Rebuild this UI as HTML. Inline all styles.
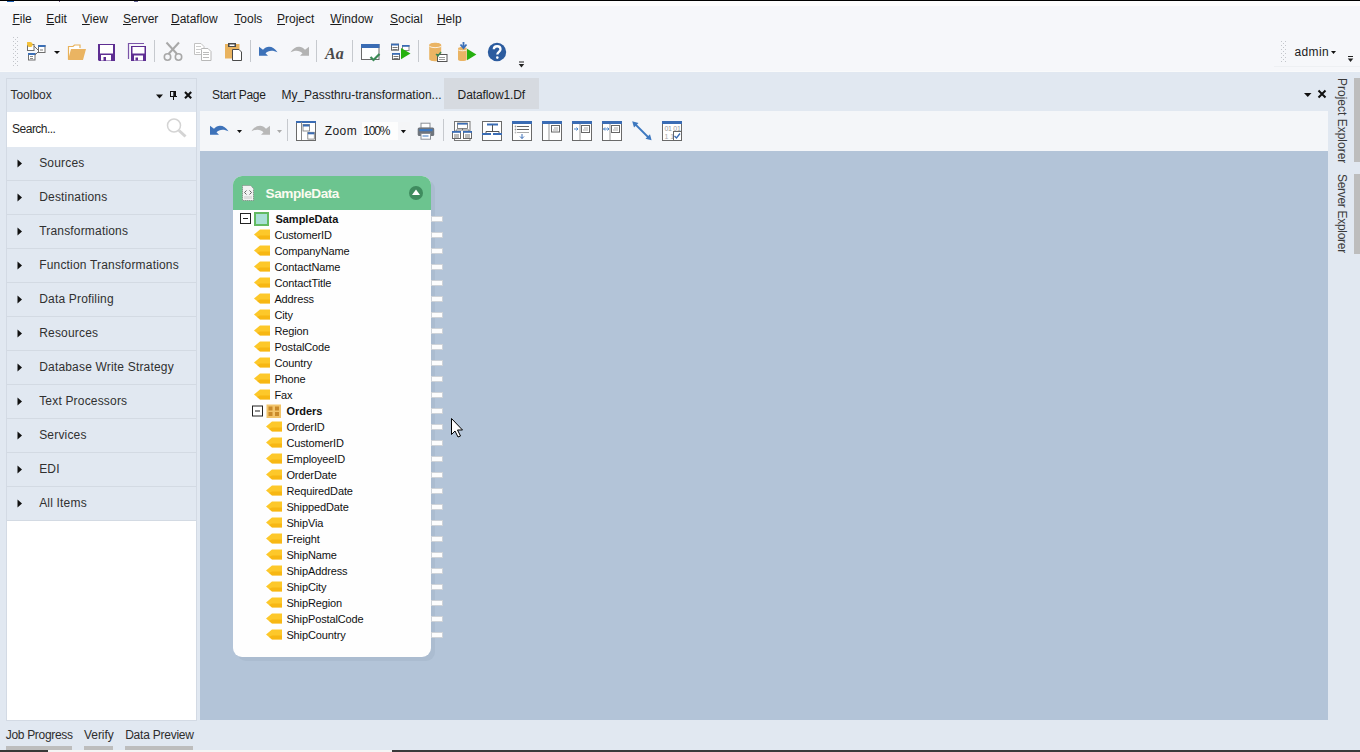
<!DOCTYPE html>
<html><head><meta charset="utf-8">
<style>
*{margin:0;padding:0;box-sizing:border-box}
html,body{width:1360px;height:752px;overflow:hidden}
body{position:relative;background:#e1e8f1;font-family:"Liberation Sans",sans-serif;color:#1e1e1e}
.a{position:absolute}
.t{position:absolute;white-space:nowrap;line-height:1}
.u{text-decoration:underline;text-underline-offset:1px;text-decoration-thickness:1px}
svg{position:absolute;left:0;top:0}
</style></head><body>

<div class="a" style="left:0px;top:0px;width:1360px;height:1px;background:#000;"></div>
<div class="a" style="left:0px;top:1px;width:1360px;height:6px;background:#fdfdfd;"></div>
<div class="a" style="left:7px;top:1px;width:7px;height:1px;background:#1d5fb0;"></div>
<div class="a" style="left:59px;top:1px;width:1px;height:1px;background:#7a5a8a;"></div>
<div class="a" style="left:134px;top:1px;width:4px;height:1px;background:#6a6a9a;"></div>
<div class="a" style="left:0px;top:6px;width:1360px;height:66px;background:#f6f7fa;"></div>
<div class="a" style="left:0px;top:71px;width:1360px;height:1px;background:#f9fafb;"></div>
<div class="a" style="left:1274px;top:66px;width:86px;height:1px;background:#eef0f3;"></div>
<div class="a" style="left:6px;top:78px;width:191px;height:643px;background:#fff;border:1px solid #d3dae4;"></div>
<div class="a" style="left:7px;top:79px;width:189px;height:33px;background:#e1e8f1;"></div>
<div class="a" style="left:7px;top:112px;width:189px;height:35px;background:#fff;"></div>
<div class="a" style="left:7px;top:147px;width:189px;height:34px;background:#e1e8f1;border-bottom:1px solid #d3dae3;"></div>
<div class="a" style="left:7px;top:181px;width:189px;height:34px;background:#e1e8f1;border-bottom:1px solid #d3dae3;"></div>
<div class="a" style="left:7px;top:215px;width:189px;height:34px;background:#e1e8f1;border-bottom:1px solid #d3dae3;"></div>
<div class="a" style="left:7px;top:249px;width:189px;height:34px;background:#e1e8f1;border-bottom:1px solid #d3dae3;"></div>
<div class="a" style="left:7px;top:283px;width:189px;height:34px;background:#e1e8f1;border-bottom:1px solid #d3dae3;"></div>
<div class="a" style="left:7px;top:317px;width:189px;height:34px;background:#e1e8f1;border-bottom:1px solid #d3dae3;"></div>
<div class="a" style="left:7px;top:351px;width:189px;height:34px;background:#e1e8f1;border-bottom:1px solid #d3dae3;"></div>
<div class="a" style="left:7px;top:385px;width:189px;height:34px;background:#e1e8f1;border-bottom:1px solid #d3dae3;"></div>
<div class="a" style="left:7px;top:419px;width:189px;height:34px;background:#e1e8f1;border-bottom:1px solid #d3dae3;"></div>
<div class="a" style="left:7px;top:453px;width:189px;height:34px;background:#e1e8f1;border-bottom:1px solid #d3dae3;"></div>
<div class="a" style="left:7px;top:487px;width:189px;height:34px;background:#e1e8f1;border-bottom:1px solid #d3dae3;"></div>
<div class="a" style="left:200px;top:78px;width:1128px;height:33px;background:#e1e8f1;"></div>
<div class="a" style="left:444px;top:78px;width:95px;height:31px;background:#d6dae0;"></div>
<div class="a" style="left:200px;top:111px;width:1128px;height:40px;background:#f4f6f9;"></div>
<div class="a" style="left:200px;top:151px;width:1128px;height:569px;background:#b3c4d8;"></div>
<div class="a" style="left:1354px;top:78px;width:6px;height:84px;background:#bdbdbd;"></div>
<div class="a" style="left:1354px;top:174px;width:6px;height:80px;background:#bdbdbd;"></div>
<div class="a" style="left:6px;top:746px;width:66px;height:4px;background:#bdbdbd;"></div>
<div class="a" style="left:84px;top:746px;width:29px;height:4px;background:#bdbdbd;"></div>
<div class="a" style="left:125px;top:746px;width:68px;height:4px;background:#bdbdbd;"></div>
<div class="a" style="left:0px;top:750px;width:48px;height:2px;background:#383838;"></div>
<div class="a" style="left:48px;top:750px;width:344px;height:2px;background:#f4f4f4;"></div>
<div class="a" style="left:392px;top:750px;width:968px;height:2px;background:#3a3a3a;"></div>
<div class="a" style="left:237px;top:180px;width:198px;height:481px;background:#abbcd0;border-radius:9px;"></div>
<div class="a" style="left:233px;top:176px;width:198px;height:481px;background:#fefefe;border-radius:9px;overflow:hidden;"></div>
<div class="a" style="left:233px;top:176px;width:198px;height:34px;background:#6cc48f;border-radius:9px 9px 0 0;"></div>
<div class="a" style="left:431px;top:216px;width:12px;height:6px;background:#fdfdfd;border:1px solid #cfd3d8;"></div>
<div class="a" style="left:431px;top:232px;width:12px;height:6px;background:#fdfdfd;border:1px solid #cfd3d8;"></div>
<div class="a" style="left:431px;top:248px;width:12px;height:6px;background:#fdfdfd;border:1px solid #cfd3d8;"></div>
<div class="a" style="left:431px;top:264px;width:12px;height:6px;background:#fdfdfd;border:1px solid #cfd3d8;"></div>
<div class="a" style="left:431px;top:280px;width:12px;height:6px;background:#fdfdfd;border:1px solid #cfd3d8;"></div>
<div class="a" style="left:431px;top:296px;width:12px;height:6px;background:#fdfdfd;border:1px solid #cfd3d8;"></div>
<div class="a" style="left:431px;top:312px;width:12px;height:6px;background:#fdfdfd;border:1px solid #cfd3d8;"></div>
<div class="a" style="left:431px;top:328px;width:12px;height:6px;background:#fdfdfd;border:1px solid #cfd3d8;"></div>
<div class="a" style="left:431px;top:344px;width:12px;height:6px;background:#fdfdfd;border:1px solid #cfd3d8;"></div>
<div class="a" style="left:431px;top:360px;width:12px;height:6px;background:#fdfdfd;border:1px solid #cfd3d8;"></div>
<div class="a" style="left:431px;top:376px;width:12px;height:6px;background:#fdfdfd;border:1px solid #cfd3d8;"></div>
<div class="a" style="left:431px;top:392px;width:12px;height:6px;background:#fdfdfd;border:1px solid #cfd3d8;"></div>
<div class="a" style="left:431px;top:408px;width:12px;height:6px;background:#fdfdfd;border:1px solid #cfd3d8;"></div>
<div class="a" style="left:431px;top:424px;width:12px;height:6px;background:#fdfdfd;border:1px solid #cfd3d8;"></div>
<div class="a" style="left:431px;top:440px;width:12px;height:6px;background:#fdfdfd;border:1px solid #cfd3d8;"></div>
<div class="a" style="left:431px;top:456px;width:12px;height:6px;background:#fdfdfd;border:1px solid #cfd3d8;"></div>
<div class="a" style="left:431px;top:472px;width:12px;height:6px;background:#fdfdfd;border:1px solid #cfd3d8;"></div>
<div class="a" style="left:431px;top:488px;width:12px;height:6px;background:#fdfdfd;border:1px solid #cfd3d8;"></div>
<div class="a" style="left:431px;top:504px;width:12px;height:6px;background:#fdfdfd;border:1px solid #cfd3d8;"></div>
<div class="a" style="left:431px;top:520px;width:12px;height:6px;background:#fdfdfd;border:1px solid #cfd3d8;"></div>
<div class="a" style="left:431px;top:536px;width:12px;height:6px;background:#fdfdfd;border:1px solid #cfd3d8;"></div>
<div class="a" style="left:431px;top:552px;width:12px;height:6px;background:#fdfdfd;border:1px solid #cfd3d8;"></div>
<div class="a" style="left:431px;top:568px;width:12px;height:6px;background:#fdfdfd;border:1px solid #cfd3d8;"></div>
<div class="a" style="left:431px;top:584px;width:12px;height:6px;background:#fdfdfd;border:1px solid #cfd3d8;"></div>
<div class="a" style="left:431px;top:600px;width:12px;height:6px;background:#fdfdfd;border:1px solid #cfd3d8;"></div>
<div class="a" style="left:431px;top:616px;width:12px;height:6px;background:#fdfdfd;border:1px solid #cfd3d8;"></div>
<div class="a" style="left:431px;top:632px;width:12px;height:6px;background:#fdfdfd;border:1px solid #cfd3d8;"></div>
<svg width="1360" height="752" viewBox="0 0 1360 752"><rect x="13" y="37" width="1" height="1" fill="#c3c6cb"/><rect x="17" y="37" width="1" height="1" fill="#c3c6cb"/><rect x="15" y="39" width="1" height="1" fill="#c3c6cb"/><rect x="13" y="41" width="1" height="1" fill="#c3c6cb"/><rect x="17" y="41" width="1" height="1" fill="#c3c6cb"/><rect x="15" y="43" width="1" height="1" fill="#c3c6cb"/><rect x="13" y="45" width="1" height="1" fill="#c3c6cb"/><rect x="17" y="45" width="1" height="1" fill="#c3c6cb"/><rect x="15" y="47" width="1" height="1" fill="#c3c6cb"/><rect x="13" y="49" width="1" height="1" fill="#c3c6cb"/><rect x="17" y="49" width="1" height="1" fill="#c3c6cb"/><rect x="15" y="51" width="1" height="1" fill="#c3c6cb"/><rect x="13" y="53" width="1" height="1" fill="#c3c6cb"/><rect x="17" y="53" width="1" height="1" fill="#c3c6cb"/><rect x="15" y="55" width="1" height="1" fill="#c3c6cb"/><rect x="13" y="57" width="1" height="1" fill="#c3c6cb"/><rect x="17" y="57" width="1" height="1" fill="#c3c6cb"/><rect x="15" y="59" width="1" height="1" fill="#c3c6cb"/><rect x="13" y="61" width="1" height="1" fill="#c3c6cb"/><rect x="17" y="61" width="1" height="1" fill="#c3c6cb"/><rect x="15" y="63" width="1" height="1" fill="#c3c6cb"/><rect x="13" y="65" width="1" height="1" fill="#c3c6cb"/><rect x="17" y="65" width="1" height="1" fill="#c3c6cb"/><rect x="1281" y="41" width="1" height="1" fill="#c3c6cb"/><rect x="1285" y="41" width="1" height="1" fill="#c3c6cb"/><rect x="1283" y="43" width="1" height="1" fill="#c3c6cb"/><rect x="1281" y="45" width="1" height="1" fill="#c3c6cb"/><rect x="1285" y="45" width="1" height="1" fill="#c3c6cb"/><rect x="1283" y="47" width="1" height="1" fill="#c3c6cb"/><rect x="1281" y="49" width="1" height="1" fill="#c3c6cb"/><rect x="1285" y="49" width="1" height="1" fill="#c3c6cb"/><rect x="1283" y="51" width="1" height="1" fill="#c3c6cb"/><rect x="1281" y="53" width="1" height="1" fill="#c3c6cb"/><rect x="1285" y="53" width="1" height="1" fill="#c3c6cb"/><rect x="1283" y="55" width="1" height="1" fill="#c3c6cb"/><rect x="1281" y="57" width="1" height="1" fill="#c3c6cb"/><rect x="1285" y="57" width="1" height="1" fill="#c3c6cb"/><rect x="1283" y="59" width="1" height="1" fill="#c3c6cb"/><rect x="1281" y="61" width="1" height="1" fill="#c3c6cb"/><rect x="1285" y="61" width="1" height="1" fill="#c3c6cb"/><rect x="154" y="40" width="1" height="22" fill="#c6c9ce"/><rect x="250" y="40" width="1" height="22" fill="#c6c9ce"/><rect x="316" y="40" width="1" height="22" fill="#c6c9ce"/><rect x="352" y="40" width="1" height="22" fill="#c6c9ce"/><rect x="418" y="40" width="1" height="22" fill="#c6c9ce"/><rect x="287" y="119" width="1" height="22" fill="#c6c9ce"/><rect x="443" y="119" width="1" height="22" fill="#c6c9ce"/><g>
<rect x="27.5" y="44.5" width="6.5" height="6" fill="#fff" stroke="#6e6e6e"/>
<path d="M27,42 l3,0 l1,3 l-4,0z" fill="#f5c342"/>
<circle cx="30" cy="44.5" r="2.6" fill="#f3c13a"/>
<rect x="38.5" y="45.5" width="6.5" height="7" fill="#fff" stroke="#6e6e6e"/>
<rect x="38" y="45" width="7.5" height="2" fill="#3b6fb6"/>
<rect x="28.5" y="53.5" width="6.5" height="6.5" fill="#fff" stroke="#6e6e6e"/>
<rect x="28" y="53" width="7.5" height="2" fill="#3b6fb6"/>
<path d="M34,46 L38,50 M35,55 L38,52" stroke="#6e6e6e" stroke-width="1" fill="none"/>
<rect x="40" y="49" width="3" height="2" fill="#bbb"/>
<rect x="30" y="56" width="3" height="1" fill="#888"/><rect x="30" y="58" width="3" height="1" fill="#888"/>
</g><path d="M54,51 h6 l-3.0,3 z" fill="#111"/><path d="M68.5,59.5 V46.5 H73 L74.5,45 H80 V48" fill="#fff" stroke="#e8b25a" stroke-width="1.2"/>
<path d="M68,60 L71,49 H86 L83,60 Z" fill="#eab462"/><g>
<path d="M98,44 H115 V61 H99 L98,60 Z" fill="#5e2e92"/>
<rect x="100" y="45" width="13" height="8.5" fill="#fff"/>
<rect x="101" y="55" width="10" height="5.5" fill="#fff"/>
<rect x="103.5" y="57" width="2.5" height="4" fill="#5e2e92"/>
</g><g>
<path d="M128.5,59 V43.5 H144" fill="none" stroke="#7b55a8" stroke-width="1.2"/>
<path d="M131,46 H146 V61 H131 Z" fill="#5e2e92"/>
<rect x="132.5" y="47" width="12" height="6.5" fill="#fff"/>
<rect x="134" y="55.5" width="9" height="5" fill="#fff"/>
<rect x="135.5" y="57.5" width="2.5" height="3" fill="#5e2e92"/>
</g><g stroke="#a8a8a8" fill="none">
<path d="M166.5,42.5 L177,54" stroke-width="2"/>
<path d="M179,42.5 L168.5,54" stroke-width="2"/>
<circle cx="167.5" cy="57" r="3.2" stroke-width="1.6"/>
<circle cx="178.5" cy="57" r="3.2" stroke-width="1.6"/>
</g><g>
<path d="M194.5,43.5 H201 L204,46.5 V54.5 H194.5 Z" fill="#fff" stroke="#c2c2c2"/>
<path d="M201.5,48.5 H208 L211,51.5 V60.5 H201.5 Z" fill="#fff" stroke="#b8b8b8"/>
<rect x="196" y="46" width="5" height="1" fill="#ccc"/><rect x="196" y="49" width="6" height="1" fill="#ccc"/><rect x="196" y="52" width="4" height="1" fill="#ccc"/>
<rect x="203" y="52" width="6" height="1" fill="#bbb"/><rect x="203" y="54" width="6" height="1" fill="#bbb"/><rect x="203" y="57" width="6" height="1" fill="#bbb"/>
</g><g>
<rect x="225" y="44" width="14.5" height="14.5" fill="#e9b35f"/>
<rect x="228" y="43" width="8" height="4" fill="#4a4a4a"/>
<rect x="229.5" y="44.5" width="5" height="1.5" fill="#fff"/>
<path d="M232.5,49.5 H239 L241.5,52 V60.5 H232.5 Z" fill="#fff" stroke="#4a4a4a"/>
</g><g transform="translate(259,45.3)"><path d="M0,1.5 L0,10.5 L9,10.5 L6.5,8 C9,5 14,4.5 18.5,7 C15,1 8,-0.5 4,4.5 Z" fill="#3d72b9"/></g><g transform="translate(290,45.3) translate(19,0) scale(-1,1)"><path d="M0,1.5 L0,10.5 L9,10.5 L6.5,8 C9,5 14,4.5 18.5,7 C15,1 8,-0.5 4,4.5 Z" fill="#b3b3b3"/></g><g>
<rect x="361.5" y="44.5" width="17.5" height="15" fill="#fff" stroke="#6a6a6a"/>
<rect x="361" y="44" width="18.5" height="4" fill="#3a6cb4"/>
<path d="M370.5,57 L373.5,60 L379.5,54" stroke="#3b8a55" stroke-width="2.2" fill="none"/>
</g><g>
<rect x="391.5" y="44.2" width="7" height="6" fill="#fff" stroke="#666"/><rect x="391" y="43.7" width="8" height="1.8" fill="#3a6cb4"/>
<rect x="402.5" y="45.5" width="6.5" height="5" fill="#fff" stroke="#888"/><rect x="402" y="45" width="7.5" height="1.8" fill="#3a6cb4"/>
<rect x="392.5" y="53.5" width="7" height="6" fill="#fff" stroke="#666"/><rect x="392" y="53" width="8" height="1.8" fill="#3a6cb4"/>
<rect x="393.5" y="56" width="5" height="1" fill="#777"/><rect x="393.5" y="58" width="5" height="1" fill="#777"/>
<rect x="392.5" y="47" width="5" height="1" fill="#777"/><rect x="392.5" y="49" width="5" height="1" fill="#777"/>
<path d="M401,48 L410.5,53.5 L401,59.2 Z" fill="#26b00f"/>
</g><g>
<path d="M429.2,45 C429.2,42 441.2,42 441.2,45 V59 C441.2,62 429.2,62 429.2,59 Z" fill="#eab464"/>
<path d="M429.5,46.5 C432,48 438,48 441,46.5" stroke="#fff" stroke-width="0.8" fill="none"/>
<rect x="437.5" y="54.5" width="9.5" height="7" fill="#fff" stroke="#555"/>
<rect x="439" y="57" width="6" height="1" fill="#999"/><rect x="439" y="59" width="6" height="1" fill="#999"/>
<path d="M436,54 L438,56 L441,52" stroke="#3b8a55" stroke-width="1.4" fill="none"/>
</g><g>
<path d="M458,48.5 C458,46.5 466.7,46.5 466.7,48.5 V59.5 C466.7,61.5 458,61.5 458,59.5 Z" fill="#eab464"/>
<path d="M458.3,50 C461,51 464,51 466.5,50" stroke="#fff" stroke-width="0.8" fill="none"/>
<path d="M463.5,42 V47 M460.5,44.5 L463.5,48 L466.5,44.5" stroke="#3c71b8" stroke-width="1.8" fill="none"/>
<path d="M467,48.7 L476.4,54.5 L467,60.3 Z" fill="#26b00f"/>
</g><g>
<circle cx="497" cy="52" r="9.2" fill="#2c5c9f"/>
<path d="M493.8,49.3 C493.8,45.2 500.5,45.2 500.5,49.3 C500.5,51.8 497.3,52 497.3,54.6" stroke="#fff" stroke-width="2.3" fill="none"/>
<circle cx="497.3" cy="57.6" r="1.3" fill="#fff"/>
</g><rect x="519" y="61.5" width="5" height="1" fill="#222"/><path d="M518.7,64 h5.5 l-2.75,3.5 z" fill="#222"/><rect x="1348" y="56" width="5" height="1" fill="#222"/><path d="M1347.8,58.5 h5.5 l-2.75,3.5 z" fill="#222"/><path d="M1331,51 h5 l-2.5,3 z" fill="#111"/><path d="M156,94.5 h7 l-3.5,4 z" fill="#111"/><g fill="#111"><rect x="170" y="91" width="6" height="1"/><rect x="170" y="91" width="1" height="5"/><rect x="173.3" y="91" width="2.7" height="5"/><rect x="170" y="96" width="7" height="1"/><rect x="173" y="97" width="1" height="3"/></g><path d="M185,92 L191.2,98.3 M191.2,92 L185,98.3" stroke="#111" stroke-width="2.1" fill="none"/><g stroke="#d4d4d4" fill="none"><circle cx="174" cy="125.5" r="6.5" stroke-width="1.5"/><path d="M179,130.5 L185.5,136.5" stroke-width="3"/></g><path d="M17.5,159.5 L22,163.5 L17.5,167.5 Z" fill="#111"/><path d="M17.5,193.5 L22,197.5 L17.5,201.5 Z" fill="#111"/><path d="M17.5,227.5 L22,231.5 L17.5,235.5 Z" fill="#111"/><path d="M17.5,261.5 L22,265.5 L17.5,269.5 Z" fill="#111"/><path d="M17.5,295.5 L22,299.5 L17.5,303.5 Z" fill="#111"/><path d="M17.5,329.5 L22,333.5 L17.5,337.5 Z" fill="#111"/><path d="M17.5,363.5 L22,367.5 L17.5,371.5 Z" fill="#111"/><path d="M17.5,397.5 L22,401.5 L17.5,405.5 Z" fill="#111"/><path d="M17.5,431.5 L22,435.5 L17.5,439.5 Z" fill="#111"/><path d="M17.5,465.5 L22,469.5 L17.5,473.5 Z" fill="#111"/><path d="M17.5,499.5 L22,503.5 L17.5,507.5 Z" fill="#111"/><path d="M1304,93 h7.5 l-3.75,4 z" fill="#111"/><path d="M1318.5,90.5 L1325.5,97.5 M1325.5,90.5 L1318.5,97.5" stroke="#111" stroke-width="2" fill="none"/><g transform="translate(210,124.3)"><path d="M0,1.5 L0,10.5 L9,10.5 L6.5,8 C9,5 14,4.5 18.5,7 C15,1 8,-0.5 4,4.5 Z" fill="#3d72b9"/></g><path d="M237,130 h5 l-2.5,3 z" fill="#111"/><g transform="translate(251,124.3) translate(19,0) scale(-1,1)"><path d="M0,1.5 L0,10.5 L9,10.5 L6.5,8 C9,5 14,4.5 18.5,7 C15,1 8,-0.5 4,4.5 Z" fill="#b8b8b8"/></g><path d="M277,130 h5 l-2.5,3 z" fill="#aaa"/><g>
<rect x="296.5" y="121.5" width="19" height="19" fill="#fff" stroke="#6a6a6a"/>
<rect x="296" y="121" width="20" height="2" fill="#3a6cb4"/>
<rect x="301" y="122" width="1" height="18" fill="#888"/>
<rect x="303" y="124.5" width="6.5" height="6.5" fill="#fff" stroke="#777" stroke-width="0.8"/><rect x="303" y="124.5" width="6.5" height="2" fill="#3a6cb4"/>
<rect x="307.8" y="132.3" width="6.5" height="6.8" fill="#fff" stroke="#777" stroke-width="0.8"/><rect x="307.8" y="132.3" width="6.5" height="2" fill="#3a6cb4"/>
</g><rect x="362" y="122" width="48" height="18" fill="#fdfdfd"/><rect x="398" y="122" width="12" height="18" fill="#f4f5f7"/><path d="M400.8,130 h5.2 l-2.6,3.2 z" fill="#111"/><g>
<rect x="421" y="123.2" width="9" height="5" fill="#fff" stroke="#8a8f96"/>
<rect x="417.7" y="127.5" width="16.5" height="8.5" rx="1.5" fill="#6f757d"/>
<rect x="419.5" y="129" width="13" height="2.2" fill="#3d78c0"/>
<rect x="421" y="133.5" width="9.5" height="5.7" fill="#fff" stroke="#8a8f96"/>
<rect x="422.5" y="135.5" width="6" height="1" fill="#3d78c0"/>
</g><g>
<rect x="454.5" y="121.5" width="15.5" height="19" fill="#fff" stroke="#777"/>
<rect x="457.5" y="123" width="10" height="5.5" fill="#fff" stroke="#666" stroke-width="0.8"/><rect x="457.5" y="123" width="10" height="1.6" fill="#3a6cb4"/>
<path d="M462.5,128.5 V130 M456,131 V130 H469 V131" stroke="#666" stroke-width="0.9" fill="none"/>
<rect x="452.5" y="131.5" width="8" height="7" fill="#fff" stroke="#666"/><rect x="452" y="131" width="9" height="1.8" fill="#3a6cb4"/>
<rect x="463.5" y="131.5" width="8" height="7" fill="#fff" stroke="#666"/><rect x="463" y="131" width="9" height="1.8" fill="#3a6cb4"/>
<rect x="454" y="134.5" width="5" height="1" fill="#777"/><rect x="465" y="134.5" width="5" height="1" fill="#777"/>
<rect x="454" y="136.5" width="5" height="1" fill="#777"/><rect x="465" y="136.5" width="5" height="1" fill="#777"/>
</g><rect x="482.5" y="121.5" width="19" height="19" fill="#fff" stroke="#6a6a6a"/><g><rect x="487" y="123.5" width="11" height="2" fill="#3a6cb4"/>
<path d="M492.5,125 V131.5 M486,133 V131.5 H499 V133" stroke="#555" stroke-width="1" fill="none"/>
<rect x="482" y="133" width="9" height="2" fill="#3a6cb4"/><rect x="493" y="133" width="9" height="2" fill="#3a6cb4"/></g><rect x="512.5" y="121.5" width="19" height="19" fill="#fff" stroke="#6a6a6a"/><rect x="512" y="121" width="20" height="3" fill="#3a6cb4"/><g><circle cx="515.5" cy="126.5" r="0.9" fill="#999"/><rect x="517" y="126" width="12" height="1" fill="#666"/>
<circle cx="515.5" cy="129.5" r="0.9" fill="#999"/><rect x="517" y="129" width="12" height="1" fill="#666"/>
<circle cx="515.5" cy="132.5" r="0.9" fill="#bbb"/><rect x="517" y="132" width="12" height="1" fill="#aaa"/>
<path d="M522,134 V138.5 M520,136.5 L522,138.5 L524,136.5" stroke="#3a6cb4" stroke-width="1" fill="none"/></g><rect x="542.5" y="121.5" width="19" height="19" fill="#fff" stroke="#6a6a6a"/><rect x="542" y="121" width="20" height="3" fill="#3a6cb4"/><g><rect x="548.5" y="124" width="1" height="16" fill="#999"/>
<rect x="551.5" y="125.5" width="8" height="6.5" fill="#fff" stroke="#666"/><rect x="554" y="127.5" width="4" height="1" fill="#aaa"/><rect x="553" y="129.5" width="5" height="1" fill="#aaa"/></g><rect x="572.5" y="121.5" width="19" height="19" fill="#fff" stroke="#6a6a6a"/><rect x="572" y="121" width="20" height="3" fill="#3a6cb4"/><g><rect x="579.5" y="124" width="1" height="16" fill="#999"/>
<rect x="581.5" y="125.5" width="8" height="7" fill="#fff" stroke="#666"/><rect x="584" y="127.5" width="4" height="1" fill="#aaa"/><rect x="583" y="129.5" width="5" height="1" fill="#aaa"/>
<path d="M574,129 H578 M576.5,127.5 L578,129 L576.5,130.5" stroke="#4a86cc" stroke-width="1" fill="none"/></g><rect x="602.5" y="121.5" width="19" height="19" fill="#fff" stroke="#6a6a6a"/><rect x="602" y="121" width="20" height="3" fill="#3a6cb4"/><g><rect x="609.5" y="124" width="1" height="16" fill="#999"/>
<rect x="611.5" y="125.5" width="8" height="7" fill="#fff" stroke="#666"/><rect x="614" y="127.5" width="4" height="1" fill="#aaa"/><rect x="613" y="129.5" width="5" height="1" fill="#aaa"/>
<path d="M603.5,129 H609 M605,127.5 L603.5,129 L605,130.5 M607.5,127.5 L609,129 L607.5,130.5" stroke="#4a86cc" stroke-width="1" fill="none"/></g><g><path d="M634.5,123.5 L649.5,138.5" stroke="#3d78c0" stroke-width="1.8"/>
<path d="M632.2,121.3 L638.5,123 L634,127.5 Z" fill="#3d78c0"/>
<path d="M651.6,140.3 L645.5,138.8 L650,134.3 Z" fill="#3d78c0"/></g><rect x="662.5" y="121.5" width="19" height="19" fill="#fff" stroke="#6a6a6a"/><rect x="662" y="121" width="20" height="3" fill="#3a6cb4"/><g><text x="664.5" y="130.5" font-family="Liberation Sans" font-size="7" fill="#9a9a9a" letter-spacing="-0.3">01 01</text>
<text x="664.5" y="138.5" font-family="Liberation Sans" font-size="7" fill="#aaa">1 1</text>
<rect x="673.5" y="131.5" width="8" height="9" fill="#fff" stroke="#666"/>
<path d="M674.5,136 L676.5,138 L680,133.5" stroke="#3a6cb4" stroke-width="1.3" fill="none"/></g><g>
<path d="M242.5,185.5 H250.5 L253.5,188.5 V200.5 H242.5 Z" fill="#f2f2f2" stroke="#777" stroke-width="0.9" stroke-dasharray="1 1"/>
<path d="M246.5,190.5 L244.5,192.5 L246.5,194.5 M249.5,190.5 L251.5,192.5 L249.5,194.5" stroke="#555" stroke-width="0.9" fill="none"/>
<rect x="244" y="196" width="8" height="3" fill="#ddd"/>
</g>
<circle cx="416" cy="193" r="7" fill="#3f8c5f"/>
<path d="M412,195 L416,189.5 L420,195 Z" fill="#fff"/>
<rect x="240.5" y="213.5" width="10" height="10" fill="#fff" stroke="#222"/><rect x="243" y="218" width="5" height="1" fill="#222"/><rect x="255" y="213" width="13" height="12" fill="#a9dfd6" stroke="#62ba62" stroke-width="2"/><path d="M254,234.5 L260,229.5 H270 V239.5 H260 Z" fill="#fdc82a"/><path d="M257,237.0 L260,239.5 H270 V235.5 H260 Z" fill="#f2a900" opacity="0.55"/><path d="M254,250.5 L260,245.5 H270 V255.5 H260 Z" fill="#fdc82a"/><path d="M257,253.0 L260,255.5 H270 V251.5 H260 Z" fill="#f2a900" opacity="0.55"/><path d="M254,266.5 L260,261.5 H270 V271.5 H260 Z" fill="#fdc82a"/><path d="M257,269.0 L260,271.5 H270 V267.5 H260 Z" fill="#f2a900" opacity="0.55"/><path d="M254,282.5 L260,277.5 H270 V287.5 H260 Z" fill="#fdc82a"/><path d="M257,285.0 L260,287.5 H270 V283.5 H260 Z" fill="#f2a900" opacity="0.55"/><path d="M254,298.5 L260,293.5 H270 V303.5 H260 Z" fill="#fdc82a"/><path d="M257,301.0 L260,303.5 H270 V299.5 H260 Z" fill="#f2a900" opacity="0.55"/><path d="M254,314.5 L260,309.5 H270 V319.5 H260 Z" fill="#fdc82a"/><path d="M257,317.0 L260,319.5 H270 V315.5 H260 Z" fill="#f2a900" opacity="0.55"/><path d="M254,330.5 L260,325.5 H270 V335.5 H260 Z" fill="#fdc82a"/><path d="M257,333.0 L260,335.5 H270 V331.5 H260 Z" fill="#f2a900" opacity="0.55"/><path d="M254,346.5 L260,341.5 H270 V351.5 H260 Z" fill="#fdc82a"/><path d="M257,349.0 L260,351.5 H270 V347.5 H260 Z" fill="#f2a900" opacity="0.55"/><path d="M254,362.5 L260,357.5 H270 V367.5 H260 Z" fill="#fdc82a"/><path d="M257,365.0 L260,367.5 H270 V363.5 H260 Z" fill="#f2a900" opacity="0.55"/><path d="M254,378.5 L260,373.5 H270 V383.5 H260 Z" fill="#fdc82a"/><path d="M257,381.0 L260,383.5 H270 V379.5 H260 Z" fill="#f2a900" opacity="0.55"/><path d="M254,394.5 L260,389.5 H270 V399.5 H260 Z" fill="#fdc82a"/><path d="M257,397.0 L260,399.5 H270 V395.5 H260 Z" fill="#f2a900" opacity="0.55"/><rect x="252.5" y="406.0" width="10" height="10" fill="#fff" stroke="#222"/><rect x="255" y="410.5" width="5" height="1" fill="#222"/><rect x="266.5" y="404.5" width="14.5" height="13.5" fill="#f2c46a"/><g fill="#c98a2a"><rect x="268.5" y="406.5" width="4" height="4"/><rect x="275" y="406.5" width="4" height="4"/><rect x="268.5" y="412" width="4" height="4"/><rect x="275" y="412" width="4" height="4"/></g><path d="M266,426.5 L272,421.5 H282 V431.5 H272 Z" fill="#fdc82a"/><path d="M269,429.0 L272,431.5 H282 V427.5 H272 Z" fill="#f2a900" opacity="0.55"/><path d="M266,442.5 L272,437.5 H282 V447.5 H272 Z" fill="#fdc82a"/><path d="M269,445.0 L272,447.5 H282 V443.5 H272 Z" fill="#f2a900" opacity="0.55"/><path d="M266,458.5 L272,453.5 H282 V463.5 H272 Z" fill="#fdc82a"/><path d="M269,461.0 L272,463.5 H282 V459.5 H272 Z" fill="#f2a900" opacity="0.55"/><path d="M266,474.5 L272,469.5 H282 V479.5 H272 Z" fill="#fdc82a"/><path d="M269,477.0 L272,479.5 H282 V475.5 H272 Z" fill="#f2a900" opacity="0.55"/><path d="M266,490.5 L272,485.5 H282 V495.5 H272 Z" fill="#fdc82a"/><path d="M269,493.0 L272,495.5 H282 V491.5 H272 Z" fill="#f2a900" opacity="0.55"/><path d="M266,506.5 L272,501.5 H282 V511.5 H272 Z" fill="#fdc82a"/><path d="M269,509.0 L272,511.5 H282 V507.5 H272 Z" fill="#f2a900" opacity="0.55"/><path d="M266,522.5 L272,517.5 H282 V527.5 H272 Z" fill="#fdc82a"/><path d="M269,525.0 L272,527.5 H282 V523.5 H272 Z" fill="#f2a900" opacity="0.55"/><path d="M266,538.5 L272,533.5 H282 V543.5 H272 Z" fill="#fdc82a"/><path d="M269,541.0 L272,543.5 H282 V539.5 H272 Z" fill="#f2a900" opacity="0.55"/><path d="M266,554.5 L272,549.5 H282 V559.5 H272 Z" fill="#fdc82a"/><path d="M269,557.0 L272,559.5 H282 V555.5 H272 Z" fill="#f2a900" opacity="0.55"/><path d="M266,570.5 L272,565.5 H282 V575.5 H272 Z" fill="#fdc82a"/><path d="M269,573.0 L272,575.5 H282 V571.5 H272 Z" fill="#f2a900" opacity="0.55"/><path d="M266,586.5 L272,581.5 H282 V591.5 H272 Z" fill="#fdc82a"/><path d="M269,589.0 L272,591.5 H282 V587.5 H272 Z" fill="#f2a900" opacity="0.55"/><path d="M266,602.5 L272,597.5 H282 V607.5 H272 Z" fill="#fdc82a"/><path d="M269,605.0 L272,607.5 H282 V603.5 H272 Z" fill="#f2a900" opacity="0.55"/><path d="M266,618.5 L272,613.5 H282 V623.5 H272 Z" fill="#fdc82a"/><path d="M269,621.0 L272,623.5 H282 V619.5 H272 Z" fill="#f2a900" opacity="0.55"/><path d="M266,634.5 L272,629.5 H282 V639.5 H272 Z" fill="#fdc82a"/><path d="M269,637.0 L272,639.5 H282 V635.5 H272 Z" fill="#f2a900" opacity="0.55"/></svg>
<div class="t" style="left:12.4px;top:12.94px;font-size:12px;color:#1b1b1b;"><span class="u">F</span>ile</div>
<div class="t" style="left:46.2px;top:12.94px;font-size:12px;color:#1b1b1b;"><span class="u">E</span>dit</div>
<div class="t" style="left:82px;top:12.94px;font-size:12px;color:#1b1b1b;"><span class="u">V</span>iew</div>
<div class="t" style="left:123px;top:12.94px;font-size:12px;color:#1b1b1b;"><span class="u">S</span>erver</div>
<div class="t" style="left:171px;top:12.94px;font-size:12px;color:#1b1b1b;"><span class="u">D</span>ataflow</div>
<div class="t" style="left:234.3px;top:12.94px;font-size:12px;color:#1b1b1b;"><span class="u">T</span>ools</div>
<div class="t" style="left:277px;top:12.94px;font-size:12px;color:#1b1b1b;"><span class="u">P</span>roject</div>
<div class="t" style="left:330.3px;top:12.94px;font-size:12px;color:#1b1b1b;"><span class="u">W</span>indow</div>
<div class="t" style="left:390px;top:12.94px;font-size:12px;color:#1b1b1b;"><span class="u">S</span>ocial</div>
<div class="t" style="left:436.9px;top:12.94px;font-size:12px;color:#1b1b1b;"><span class="u">H</span>elp</div>
<div class="t" style="left:325px;top:46.16px;font-size:16px;color:#4a4a4a;font-weight:700;font-family:'Liberation Serif';font-style:italic;">Aa</div>
<div class="t" style="left:1294.5px;top:45.74px;font-size:12px;color:#1b1b1b;letter-spacing:0.362px;">admin</div>
<div class="t" style="left:10.4px;top:88.84px;font-size:12px;color:#2d2d2d;">Toolbox</div>
<div class="t" style="left:12.1px;top:122.64px;font-size:12px;color:#262626;letter-spacing:-0.522px;">Search...</div>
<div class="t" style="left:39.2px;top:156.84px;font-size:12px;color:#303030;letter-spacing:0.18px;">Sources</div>
<div class="t" style="left:39.2px;top:190.84px;font-size:12px;color:#303030;letter-spacing:0.18px;">Destinations</div>
<div class="t" style="left:39.2px;top:224.84px;font-size:12px;color:#303030;letter-spacing:0.18px;">Transformations</div>
<div class="t" style="left:39.2px;top:258.84px;font-size:12px;color:#303030;letter-spacing:0.18px;">Function Transformations</div>
<div class="t" style="left:39.2px;top:292.84px;font-size:12px;color:#303030;letter-spacing:0.18px;">Data Profiling</div>
<div class="t" style="left:39.2px;top:326.84px;font-size:12px;color:#303030;letter-spacing:0.18px;">Resources</div>
<div class="t" style="left:39.2px;top:360.84px;font-size:12px;color:#303030;letter-spacing:0.18px;">Database Write Strategy</div>
<div class="t" style="left:39.2px;top:394.84px;font-size:12px;color:#303030;letter-spacing:0.18px;">Text Processors</div>
<div class="t" style="left:39.2px;top:428.84px;font-size:12px;color:#303030;letter-spacing:0.18px;">Services</div>
<div class="t" style="left:39.2px;top:462.84px;font-size:12px;color:#303030;letter-spacing:0.18px;">EDI</div>
<div class="t" style="left:39.2px;top:496.84px;font-size:12px;color:#303030;letter-spacing:0.18px;">All Items</div>
<div class="t" style="left:212px;top:88.54px;font-size:12px;color:#1e1e1e;letter-spacing:-0.317px;">Start Page</div>
<div class="t" style="left:281.5px;top:88.54px;font-size:12px;color:#1e1e1e;letter-spacing:-0.024px;">My_Passthru-transformation...</div>
<div class="t" style="left:457.6px;top:89.24px;font-size:12px;color:#1e1e1e;letter-spacing:-0.099px;">Dataflow1.Df</div>
<div class="t" style="left:324.7px;top:124.64px;font-size:12px;color:#1a1a1a;letter-spacing:0.457px;">Zoom</div>
<div class="t" style="left:363.3px;top:124.64px;font-size:12px;color:#1a1a1a;letter-spacing:-1.172px;">100%</div>
<div class="t" style="left:265.5px;top:186.79px;font-size:13.6px;color:#fbfbf0;font-weight:700;letter-spacing:-0.433px;">SampleData</div>
<div class="t" style="left:275.4px;top:214.49px;font-size:11px;color:#111;font-weight:700;">SampleData</div>
<div class="t" style="left:274.4px;top:230.49px;font-size:11px;color:#111;letter-spacing:-0.12px;">CustomerID</div>
<div class="t" style="left:274.4px;top:246.49px;font-size:11px;color:#111;letter-spacing:-0.12px;">CompanyName</div>
<div class="t" style="left:274.4px;top:262.49px;font-size:11px;color:#111;letter-spacing:-0.12px;">ContactName</div>
<div class="t" style="left:274.4px;top:278.49px;font-size:11px;color:#111;letter-spacing:-0.12px;">ContactTitle</div>
<div class="t" style="left:274.4px;top:294.49px;font-size:11px;color:#111;letter-spacing:-0.12px;">Address</div>
<div class="t" style="left:274.4px;top:310.49px;font-size:11px;color:#111;letter-spacing:-0.12px;">City</div>
<div class="t" style="left:274.4px;top:326.49px;font-size:11px;color:#111;letter-spacing:-0.12px;">Region</div>
<div class="t" style="left:274.4px;top:342.49px;font-size:11px;color:#111;letter-spacing:-0.12px;">PostalCode</div>
<div class="t" style="left:274.4px;top:358.49px;font-size:11px;color:#111;letter-spacing:-0.12px;">Country</div>
<div class="t" style="left:274.4px;top:374.49px;font-size:11px;color:#111;letter-spacing:-0.12px;">Phone</div>
<div class="t" style="left:274.4px;top:390.49px;font-size:11px;color:#111;letter-spacing:-0.12px;">Fax</div>
<div class="t" style="left:286.4px;top:406.49px;font-size:11px;color:#111;font-weight:700;">Orders</div>
<div class="t" style="left:286.4px;top:422.49px;font-size:11px;color:#111;letter-spacing:-0.12px;">OrderID</div>
<div class="t" style="left:286.4px;top:438.49px;font-size:11px;color:#111;letter-spacing:-0.12px;">CustomerID</div>
<div class="t" style="left:286.4px;top:454.49px;font-size:11px;color:#111;letter-spacing:-0.12px;">EmployeeID</div>
<div class="t" style="left:286.4px;top:470.49px;font-size:11px;color:#111;letter-spacing:-0.12px;">OrderDate</div>
<div class="t" style="left:286.4px;top:486.49px;font-size:11px;color:#111;letter-spacing:-0.12px;">RequiredDate</div>
<div class="t" style="left:286.4px;top:502.49px;font-size:11px;color:#111;letter-spacing:-0.12px;">ShippedDate</div>
<div class="t" style="left:286.4px;top:518.49px;font-size:11px;color:#111;letter-spacing:-0.12px;">ShipVia</div>
<div class="t" style="left:286.4px;top:534.49px;font-size:11px;color:#111;letter-spacing:-0.12px;">Freight</div>
<div class="t" style="left:286.4px;top:550.49px;font-size:11px;color:#111;letter-spacing:-0.12px;">ShipName</div>
<div class="t" style="left:286.4px;top:566.49px;font-size:11px;color:#111;letter-spacing:-0.12px;">ShipAddress</div>
<div class="t" style="left:286.4px;top:582.49px;font-size:11px;color:#111;letter-spacing:-0.12px;">ShipCity</div>
<div class="t" style="left:286.4px;top:598.49px;font-size:11px;color:#111;letter-spacing:-0.12px;">ShipRegion</div>
<div class="t" style="left:286.4px;top:614.49px;font-size:11px;color:#111;letter-spacing:-0.12px;">ShipPostalCode</div>
<div class="t" style="left:286.4px;top:630.49px;font-size:11px;color:#111;letter-spacing:-0.12px;">ShipCountry</div>
<div class="t" style="left:1336px;top:78px;font-size:12px;color:#3a3a3a;writing-mode:vertical-rl;letter-spacing:0px">Project Explorer</div>
<div class="t" style="left:1336px;top:174px;font-size:12px;color:#3a3a3a;writing-mode:vertical-rl;letter-spacing:-0.3px">Server Explorer</div>
<div class="t" style="left:5.7px;top:728.64px;font-size:12px;color:#2d2d2d;letter-spacing:-0.307px;">Job Progress</div>
<div class="t" style="left:84.1px;top:728.64px;font-size:12px;color:#2d2d2d;letter-spacing:-0.086px;">Verify</div>
<div class="t" style="left:125.2px;top:728.64px;font-size:12px;color:#2d2d2d;letter-spacing:-0.238px;">Data Preview</div>
<svg width="1360" height="752" viewBox="0 0 1360 752"><path d="M451.5,418.5 V434.5 L455,431 L458,437 L460.5,436 L457.5,430 H462.5 Z" fill="#fff" stroke="#000" stroke-width="1" stroke-linejoin="miter"/></svg>
</body></html>
